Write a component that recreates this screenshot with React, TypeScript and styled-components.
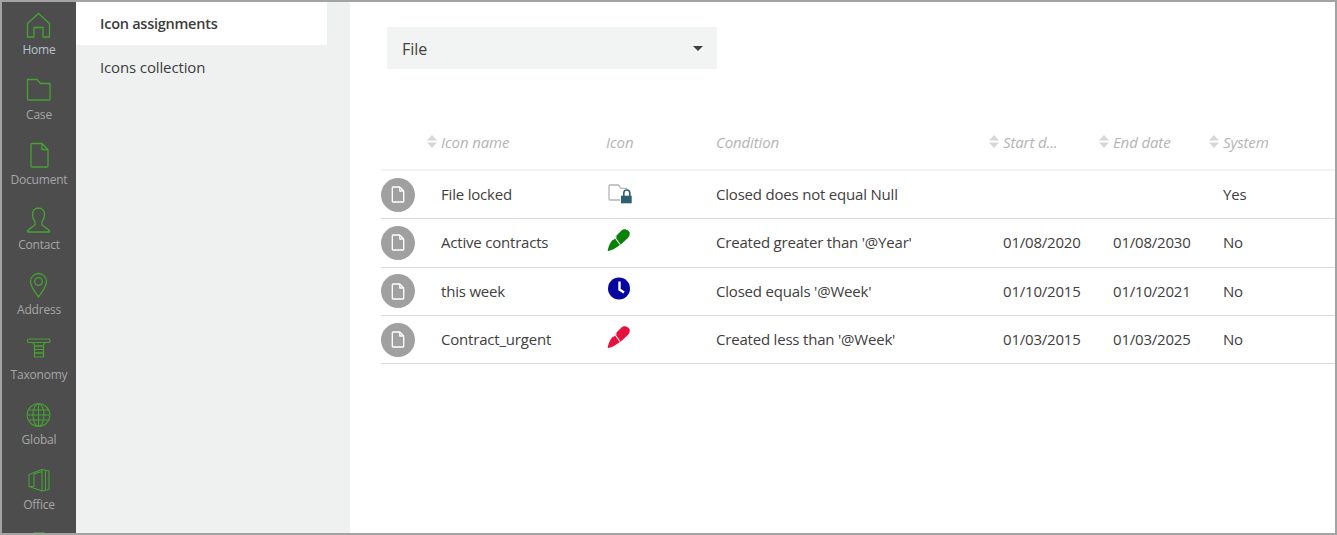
import React from 'react';
import styled, { createGlobalStyle } from 'styled-components';

const GlobalStyle = createGlobalStyle`
  html, body { margin: 0; padding: 0; background: #fff; }
  * { box-sizing: border-box; }
`;

const G = '#46a332';

const NavSvg = ({ children, width = 1.3 }: { children: React.ReactNode; width?: number }) => (
  <svg width="26" height="26" viewBox="0 0 26 26" fill="none" stroke={G} strokeWidth={width} strokeLinejoin="round">
    {children}
  </svg>
);

const HomeIcon = () => (
  <NavSvg>
    <path d="M1.500 11.500 12.500 1.500l11 10V25H17v-9.500H8V25H1.500z" />
  </NavSvg>
);
const FolderIcon = () => (
  <NavSvg>
    <path d="M1.500 2.500H11l3.500 4h9.500v15.500a1 1 0 0 1-1 1h-20.500a1 1 0 0 1-1-1z" />
  </NavSvg>
);
const DocIcon = () => (
  <NavSvg>
    <path d="M6 1.500h10l6 6V24a1 1 0 0 1-1 1H6a1 1 0 0 1-1-1V2.500a1 1 0 0 1 1-1z" />
    <path d="M16 1.500v6h6" />
  </NavSvg>
);
const PersonIcon = () => (
  <NavSvg>
    <path d="M12.500 1c-4 0-6 3-6 6.500 0 3 1 5.500 2.500 7v3.500C6.500 20 3.500 21.500 1.500 24c-.4.600 0 1 .6 1h20.800c.6 0 1-.4.6-1-2-2.500-5-4-7.500-6v-3.500c1.500-1.500 2.500-4 2.500-7 0-3.500-2-6.500-6.500-6.500z" />
  </NavSvg>
);
const PinIcon = () => (
  <NavSvg>
    <path d="M12.500 25C7.500 18 4.500 14.500 4.500 9.500a8 8 0 0 1 16 0c0 5-3 8.500-8 15.500z" />
    <circle cx="12.500" cy="9.500" r="3.800" />
  </NavSvg>
);
const TaxonomyIcon = () => (
  <NavSvg width={1.2}>
    <rect x="1.500" y="2" width="22.500" height="3.500" rx="1.500" />
    <path d="M7 5.500 9 9h8l2-3.500" />
    <rect x="8.500" y="9" width="9" height="3.500" />
    <rect x="8.500" y="12.500" width="9" height="3.500" />
    <rect x="8.500" y="16" width="9" height="4" />
  </NavSvg>
);
const GlobeIcon = () => (
  <NavSvg width={1.1}>
    <circle cx="12.500" cy="13" r="11.300" />
    <ellipse cx="12.500" cy="13" rx="5.500" ry="11.300" />
    <path d="M12.500 1.700v22.600M2.700 8h19.600M1.200 13h22.600M2.700 18h19.600" />
  </NavSvg>
);
const OfficeIcon = () => (
  <NavSvg width={1.1}>
    <path d="M3 7.500 16 2.500l7 1.500v18.500l-7 1.500L3 19.500z" />
    <path d="M16 2.500v21.500M8 7v12.500M8 7l8-2.500M3 19.500l5 0M19.500 4v19" />
  </NavSvg>
);
const BottomIcon = () => (
  <NavSvg>
    <path d="M8 1h10v6H8z" />
  </NavSvg>
);

const PageFileIcon = () => (
  <svg width="14" height="17" viewBox="0 0 14 17" fill="none" stroke="#fff" strokeWidth="1.300" strokeLinejoin="round">
    <path d="M2 1h6.800L12.700 5v10.300a.7.700 0 0 1-.7.700H2a.7.700 0 0 1-.7-.7V1.700A.7.700 0 0 1 2 1z" />
    <path d="M8.800 1v4h3.900" />
  </svg>
);

const FolderLock = () => (
  <svg width="27" height="21" viewBox="-1 0 27 21">
    <path
      d="M12 16H2a1 1 0 0 1-1-1V2a1 1 0 0 1 1-1h8.300L13 4.300h6"
      fill="none"
      stroke="#b4b4b4"
      strokeWidth="1.300"
    />
    <path d="M15.800 12V9a3 3 0 0 1 6 0v3" fill="none" stroke="#2d5f70" strokeWidth="1.600" />
    <path d="M13 11.700h10.700v7.600H13z" fill="#2d5f70" />
  </svg>
);

const PenIcon = ({ color }: { color: string }) => (
  <svg width="24" height="24" viewBox="0 0 24 24">
    <path
      d="M1.300 23C.6 23 .6 22 1 21c1-4 2.500-7 5-9.500L9 8l5-5c1.500-1.500 3-2 5-1.500 2.500.6 4 2.500 3.800 4.500-.2 1.500-1 3-2.500 4.500L15 15.500l-3.500 2.500C8 20.500 5 22.500 1.300 23z"
      fill={color}
    />
    <path d="M6.500 7.500l6.500 9M6 11.500l3.500-3" stroke="#fff" strokeWidth="1.100" fill="none" />
  </svg>
);

const ClockIcon = () => (
  <svg width="24" height="24" viewBox="0 0 24 24">
    <circle cx="12" cy="11.500" r="11" fill="#0505a0" />
    <path d="M12.500 4.500v8l4.500 3" stroke="#fff" strokeWidth="2.400" fill="none" />
  </svg>
);

const SortIcon = () => (
  <svg width="10" height="13" viewBox="0 0 10 13" fill="#d6d6d6">
    <path d="M5 0 10 5.500H0zM5 13 0 7.500h10z" />
  </svg>
);

const navItems = [
  { label: 'Home', icon: <HomeIcon />, active: true },
  { label: 'Case', icon: <FolderIcon /> },
  { label: 'Document', icon: <DocIcon /> },
  { label: 'Contact', icon: <PersonIcon /> },
  { label: 'Address', icon: <PinIcon /> },
  { label: 'Taxonomy', icon: <TaxonomyIcon /> },
  { label: 'Global', icon: <GlobeIcon /> },
  { label: 'Office', icon: <OfficeIcon /> },
  { label: '', icon: <BottomIcon /> },
];

const rows = [
  { name: 'File locked', icon: <FolderLock />, lift: 0, condition: 'Closed does not equal Null', start: '', end: '', system: 'Yes' },
  { name: 'Active contracts', icon: <PenIcon color="#0a820a" />, lift: 6, condition: "Created greater than '@Year'", start: '01/08/2020', end: '01/08/2030', system: 'No' },
  { name: 'this week', icon: <ClockIcon />, lift: 4, condition: "Closed equals '@Week'", start: '01/10/2015', end: '01/10/2021', system: 'No' },
  { name: 'Contract_urgent', icon: <PenIcon color="#e8103c" />, lift: 6, condition: "Created less than '@Week'", start: '01/03/2015', end: '01/03/2025', system: 'No' },
];

export default function App() {
  return (
    <Frame>
      <GlobalStyle />
      <Sidebar>
        {navItems.map(item => (
          <NavItem key={item.label || 'more'}>
            {item.icon}
            <NavLabel $active={item.active}>{item.label}</NavLabel>
          </NavItem>
        ))}
      </Sidebar>
      <SubNav>
        <SubNavItem $active>Icon assignments</SubNavItem>
        <SubNavItem>Icons collection</SubNavItem>
      </SubNav>
      <Main>
        <Select>
          <span>File</span>
          <Caret />
        </Select>
        <HeaderRow>
          <span />
          <HeadCell><SortIcon />Icon name</HeadCell>
          <HeadCell>Icon</HeadCell>
          <HeadCell>Condition</HeadCell>
          <HeadCell><SortIcon />Start d...</HeadCell>
          <HeadCell><SortIcon />End date</HeadCell>
          <HeadCell><SortIcon />System</HeadCell>
        </HeaderRow>
        {rows.map(row => (
          <Row key={row.name}>
            <Badge><PageFileIcon /></Badge>
            <span>{row.name}</span>
            <IconCell $lift={row.lift}>{row.icon}</IconCell>
            <span>{row.condition}</span>
            <span>{row.start}</span>
            <span>{row.end}</span>
            <span>{row.system}</span>
          </Row>
        ))}
      </Main>
    </Frame>
  );
}

const Frame = styled.div`
  display: flex;
  width: 1337px;
  height: 535px;
  border: 2px solid #a3a3a3;
  overflow: hidden;
  background: #fff;
  font-family: 'Open Sans', 'Noto Sans', sans-serif;
`;

const Sidebar = styled.nav`
  width: 74px;
  flex: none;
  background: #4d4d4d;
  padding-top: 10px;
  overflow: hidden;
`;

const NavItem = styled.div`
  height: 65px;
  display: flex;
  flex-direction: column;
  align-items: center;
`;

const NavLabel = styled.span<{ $active?: boolean }>`
  margin-top: 3px;
  font-size: 12px;
  line-height: 17px;
  letter-spacing: -0.2px;
  color: ${props => (props.$active ? '#b9c3cf' : '#a6a6a6')};
`;

const SubNav = styled.div`
  width: 274px;
  flex: none;
  background: #eff1f1;
`;

const SubNavItem = styled.div<{ $active?: boolean }>`
  width: 251px;
  height: 43px;
  padding-left: 24px;
  display: flex;
  align-items: center;
  font-size: ${props => (props.$active ? '14.5px' : '15px')};
  letter-spacing: ${props => (props.$active ? '-0.25px' : '-0.13px')};
  color: #3c3c3c;
  background: ${props => (props.$active ? '#fff' : 'transparent')};
  font-weight: ${props => (props.$active ? 600 : 400)};
`;

const Main = styled.main`
  flex: 1;
  min-width: 0;
  padding: 25px 0 0 31px;
`;

const Select = styled.div`
  width: 330px;
  height: 42px;
  margin-left: 6px;
  padding: 2px 14px 0 15px;
  display: flex;
  align-items: center;
  justify-content: space-between;
  background: #f2f3f3;
  font-size: 16px;
  color: #404040;
`;

const Caret = styled.i`
  width: 0;
  height: 0;
  margin-top: -2px;
  border-left: 5px solid transparent;
  border-right: 5px solid transparent;
  border-top: 5px solid #404040;
`;

const Grid = styled.div`
  display: grid;
  grid-template-columns: 60px 165px 110px 287px 110px 110px 1fr;
  align-items: center;
`;

const HeaderRow = styled(Grid)`
  height: 58px;
  margin-top: 44px;
  border-bottom: 2px solid #f3f3f3;
  padding-top: 1px;
`;

const HeadCell = styled.div`
  position: relative;
  display: flex;
  align-items: center;
  font-size: 15px;
  letter-spacing: -0.13px;
  font-style: italic;
  color: #b4b4b4;

  svg {
    position: absolute;
    left: -14px;
  }
`;

const Row = styled(Grid)`
  height: 48.3px;
  border-bottom: 1px solid #dcdcdc;
  font-size: 15px;
  letter-spacing: -0.2px;
  color: #404040;
  line-height: 21px;
`;

const Badge = styled.div`
  width: 34px;
  height: 34px;
  border-radius: 50%;
  background: #a0a0a0;
  display: flex;
  align-items: center;
  justify-content: center;
`;

const IconCell = styled.div<{ $lift: number }>`
  display: flex;
  align-items: center;
  padding-left: 1px;
  margin-top: ${props => -props.$lift}px;
`;
